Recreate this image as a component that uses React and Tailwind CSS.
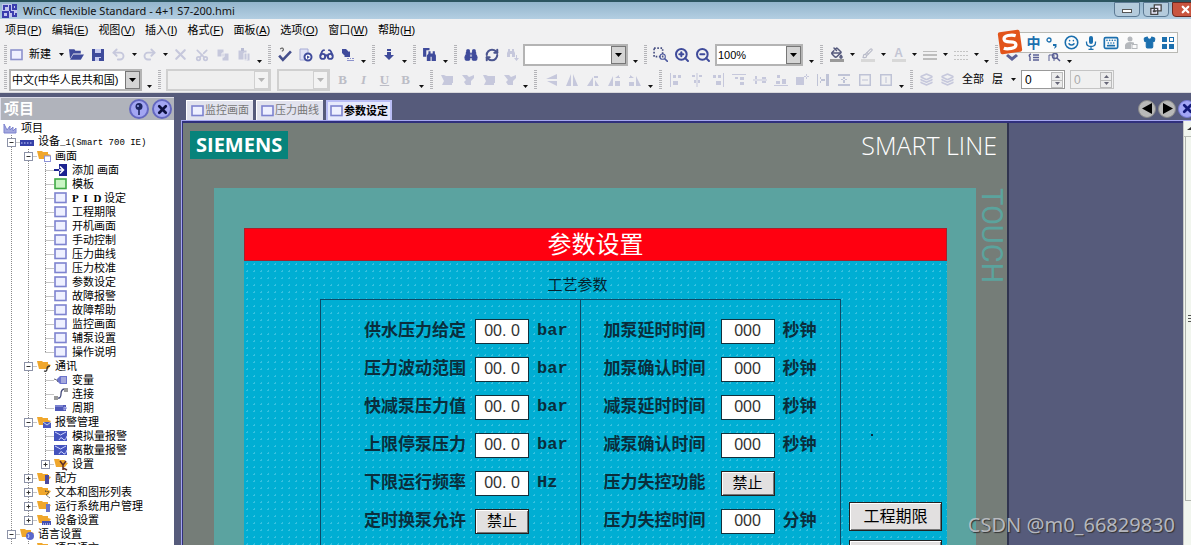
import React from "react";
import {
  Undo2, Redo2, X, Scissors, Glasses,
  Binoculars, RefreshCw, ZoomIn, ZoomOut, PaintBucket, Brush, Smile,
  Keyboard, Shirt, Layers,
} from "lucide-react";

const INK = "#3f4b9b";
const DIM = "#c6c8dc";

/* ---------- toolbar parts ---------- */

function Grip() {
  return (
    <span className="flex w-[10px] shrink-0 justify-center">
      <span className="h-[20px] w-[3px] bg-[repeating-linear-gradient(to_bottom,#b4b4b8_0_1px,#f2f2f3_1px_2px)]" />
    </span>
  );
}

function Arrow({ low = false }) {
  return (
    <button
      type="button"
      aria-label="更多"
      className={
        low
          ? "flex h-[20px] w-[10px] shrink-0 items-end justify-center pb-[2px]"
          : "flex h-[20px] w-[10px] shrink-0 items-center justify-center"
      }
    >
      <svg width="5" height="3" viewBox="0 0 5 3"><path d="M0 0h5L2.5 3z" fill="#111" /></svg>
    </button>
  );
}

function Tool({ label, children }) {
  return (
    <button type="button" aria-label={label} className="flex h-[20px] w-[21px] shrink-0 items-center justify-center">
      {children}
    </button>
  );
}

function Combo({ label, value, width, disabled = false }) {
  return (
    <span
      className={`relative flex h-[22px] shrink-0 border-2 ${width} ${
        disabled ? "border-[#d0d0d0] bg-[#efefef]" : "border-[#b4b4b4] bg-white"
      }`}
    >
      <select
        aria-label={label}
        disabled={disabled}
        className="w-full appearance-none truncate bg-transparent pl-px text-[11px] leading-[18px] text-black"
      >
        <option>{value}</option>
      </select>
      <span
        className={`pointer-events-none absolute inset-y-0 right-0 flex w-[15px] items-center justify-center border ${
          disabled ? "border-[#d0d0d0] bg-[#f3f3f3]" : "border-[#777] bg-[#d4d4d4]"
        }`}
      >
        <svg width="7" height="4" viewBox="0 0 7 4"><path d="M0 0h7L3.5 4z" fill={disabled ? "#b5b5b5" : "#000"} /></svg>
      </span>
    </span>
  );
}

function Spin({ label, disabled = false }) {
  return (
    <span className={`flex h-[19px] w-[44px] shrink-0 items-center border pr-px ${disabled ? "border-[#c4c4c4] bg-[#f0f0f0]" : "border-[#999] bg-white"}`}>
      <input
        aria-label={label}
        defaultValue="0"
        disabled={disabled}
        className={`w-0 flex-1 bg-transparent pl-[3px] text-[12px] leading-[16px] ${disabled ? "text-[#aaa]" : "text-black"}`}
      />
      <span className="flex w-[12px] flex-col border border-[#bbb] bg-[#ececec]">
        <button type="button" aria-label="增加" className="flex h-[7px] items-center justify-center">
          <svg width="5" height="3" viewBox="0 0 5 3"><path d="M0 3h5L2.5 0z" fill="#667" /></svg>
        </button>
        <button type="button" aria-label="减少" className="flex h-[7px] items-center justify-center border-t border-[#bbb]">
          <svg width="5" height="3" viewBox="0 0 5 3"><path d="M0 0h5L2.5 3z" fill="#667" /></svg>
        </button>
      </span>
    </span>
  );
}

function Svg({ children, size = 14 }) {
  return <svg width={size} height={size} viewBox="0 0 14 14" fill="none" className="shrink-0">{children}</svg>;
}

const ScreenIcon = ({ color = "#7d83cf", fill = "#eef0ff" }) => (
  <Svg><rect x="1" y="2" width="11" height="9.500" fill={fill} stroke={color} strokeWidth="1.6" /></Svg>
);

/* Alignment tools of the second toolbar row */
const ALIGN = [
  ["左对齐", "M1 0h1v14H1zM4 2h3v3H4zM9 2h3v3H9zM4 8h5v4H4z"],
  ["水平居中", "M6.500 0h1v14h-1zM2 2h3v2H2zM9 2h3v2H9zM4 7h6v3H4z"],
  ["右对齐", "M12 0h1v14h-1zM2 2h3v3H2zM7 2h3v3H7zM5 8h5v4H5z"],
  ["顶部对齐", "M0 1h14v1H0zM3 4h3v2H3zM8 4h4v3H8zM8 9h4v3H8z"],
  ["垂直居中", "M0 6.500h14v1H0zM2 3h2v8H2zM9 4h4v6H9z"],
  ["底部对齐", "M0 12h14v1H0zM2 8h4v3H2zM8 6h4v5H8zM3 2h3v3H3z"],
  ["居中", "M1 4h8v8H1zM11 1h1v5h-1zM9 3h5v1H9z"],
];
const ALIGN2 = [
  ["等宽", "M1 1h1v12H1zM10 1h3v12h-3zM4 6h5v2H4zM4 4h1v6H4z"],
  ["等高", "M1 1h12v2H1zM1 11h12v2H1zM6 4h2v6H6zM4 6h6v1H4z"],
  ["水平间距", "M1 1h12v12H1zM2.500 2.500v9h9v-9zM4 6.500h6v1H4z"],
  ["垂直间距", "M1 1h12v12H1zM2.500 2.500v9h9v-9zM6.500 4h1v6h-1z"],
];
const FLIPS = [
  ["垂直翻转", "M13 1v5L2 6zM13 8v5L3 8z"],
  ["水平翻转", "M6 1v12H1zM8 1v12h5z"],
  ["左旋", "M1 13 7 4v9zM8 3h4v2H8zM9 7l4 6H9z"],
  ["左转", "M1 13 6 3v10zM8 5l4-3v2h1v1h-3zM8 8h5v5H8z"],
  ["右转", "M13 13 8 3v10zM6 5 2 2v2H1v1h3zM1 9h5v4H1z"],
];

function PathTool({ label, d, color = DIM }) {
  return <Tool label={label}><Svg><path d={d} fill={color} fillRule="evenodd" /></Svg></Tool>;
}

function ToolbarOne() {
  return (
    <div className="flex h-[25px] items-center">
      <span className="w-[7px] shrink-0"><Grip /></span>
      <button type="button" className="flex w-[49px] shrink-0 items-center gap-[5px] pl-[3px] text-[11px] whitespace-nowrap text-black">
        <ScreenIcon color="#8c92cc" />新建
      </button>
      <Arrow />
      <Tool label="打开"><Svg size={15}><path d="M0 2h5l1 1.500h5V6H4L1 11z" fill={INK} /><path d="M4 7h10l-3 5H1z" fill={INK} /></Svg></Tool>
      <Tool label="保存"><Svg><path d="M1 1h12v12H1z" fill={INK} /><path d="M4 1h6v4H4zM4 9h6v4H4z" fill="#c9cdf0" /><path d="M8 10h2v3H8z" fill={INK} /></Svg></Tool>
      <Tool label="撤销"><Undo2 size={15} color={DIM} strokeWidth={3} /></Tool>
      <Arrow />
      <Tool label="重做"><Redo2 size={15} color={DIM} strokeWidth={3} /></Tool>
      <Arrow />
      <Tool label="删除"><X size={17} color={DIM} strokeWidth={3} /></Tool>
      <Tool label="剪切"><Scissors size={14} color={DIM} strokeWidth={3} className="-rotate-90" /></Tool>
      <Tool label="复制"><Svg><path d="M1 1h7v8H1zM6 5h7v8H6z" fill={DIM} stroke="#f1f1f3" /></Svg></Tool>
      <Tool label="粘贴"><Svg><path d="M1 2h9v10H1zM7 5h6v8H7z" fill={DIM} stroke="#f1f1f3" /><path d="M4 0h3v3H4z" fill="#b9bcd4" /></Svg></Tool>
      <Arrow low />
      <Grip />
      <Tool label="检查"><Svg size={15}><path d="m2 8 3.500 4L13 4" stroke="#454f8c" strokeWidth="2.400" /><path d="M3 2q2-2 3 0 0 1.500-1.500 2" stroke="#555" /></Svg></Tool>
      <Tool label="编译"><Svg><path d="M1 1h8v11H1z" fill="#dfe1f5" stroke="#a7acd6" /><circle cx="9" cy="9" r="3.500" fill="#fff" stroke={INK} strokeWidth="2" /><path d="M8 7.500 11 9l-3 2z" fill={INK} /></Svg></Tool>
      <Tool label="预览"><Glasses size={15} color={INK} strokeWidth={3} /></Tool>
      <Tool label="传送"><Svg><path d="M1 1h4l3 3 1-1v6H3l1-1-3-3z" fill={INK} /><path d="M6 10h2v1H6zM9 10h1v1H9zM11 10h2v1h-2zM6 12h7v1H6z" fill="#8b91cc" /></Svg></Tool>
      <Arrow low />
      <Grip />
      <Tool label="下载"><Svg><path d="M5 1h4v2H5zM5 4h4v3h3l-5 5-5-5h3z" fill={INK} /></Svg></Tool>
      <Arrow low />
      <Grip />
      <Tool label="查找替换"><Svg size={15}><path d="M1 1h6v2H4v6H1z" fill={INK} /><path d="M6 4h2v2h2V4h2v2l1 2v5h-4V9H8v4H4.500V8L6 6z" fill={INK} /></Svg></Tool>
      <Arrow low />
      <Grip />
      <Tool label="查找"><Binoculars size={14} color={INK} fill={INK} strokeWidth={2} /></Tool>
      <Tool label="刷新"><RefreshCw size={14} color="#4b558f" strokeWidth={3.5} /></Tool>
      <Tool label="查找下一个"><Svg><path d="M2 1h2v2h2V1h2v2l1 2v4H6V6H4v3H1V5l1-2z" fill={DIM} /><path d="M10 7h1v3h2l-2.500 3L8 10h2z" fill={DIM} /></Svg></Tool>
      <Combo label="查找内容" value="" width="w-[105px]" />
      <span className="w-[2px] shrink-0" />
      <Arrow low />
      <Grip />
      <Tool label="区域缩放"><Svg size={15}><path d="M1 1h8v8H1z" stroke="#444c80" strokeDasharray="1.500 1.500" strokeWidth="1.500" /><circle cx="9" cy="9" r="2.500" stroke="#4e5aa0" /><path d="m11 11 3 3" stroke="#4e5aa0" strokeWidth="1.500" /></Svg></Tool>
      <Tool label="放大"><ZoomIn size={16} color={INK} strokeWidth={3} /></Tool>
      <Tool label="缩小"><ZoomOut size={16} color={INK} strokeWidth={3} /></Tool>
      <span className="w-[2px] shrink-0" />
      <Combo label="缩放比例" value="100%" width="w-[88px]" />
      <span className="w-[3px] shrink-0" />
      <Arrow low />
      <Grip />
      <Tool label="填充颜色"><span className="flex flex-col items-center"><PaintBucket size={12} color="#55597c" strokeWidth={3} /><span className="h-[3px] w-[14px] bg-[#9a9a9a]" /></span></Tool>
      <Arrow />
      <Tool label="线条颜色"><span className="flex flex-col items-center"><Brush size={11} color="#b9bbc9" strokeWidth={2.5} /><span className="h-[3px] w-[14px] bg-[#d8d8d8]" /></span></Tool>
      <Arrow />
      <Tool label="字体颜色"><span className="flex flex-col items-center text-[12px] leading-[11px] font-bold text-[#c3c5d4]">A<span className="h-[3px] w-[14px] bg-[#d8d8d8]" /></span></Tool>
      <Arrow />
      <Tool label="线宽"><Svg><path d="M0 3h14v1H0zM0 6h14v2H0zM0 10h14v2H0z" fill="#bdbdbd" /></Svg></Tool>
      <Arrow />
      <Tool label="线型"><Svg><path d="M0 3.500h14M0 7.500h14M0 11.500h14" stroke="#c4c4c4" strokeDasharray="2 1" /></Svg></Tool>
      <Arrow />
      <Arrow low />
      <Grip />
      <Tool label="书签"><Svg><path d="m1 8 6 5 6-5-2-2-4 3-4-3z" fill="#5b6095" /></Svg></Tool>
      <Tool label="列表"><Svg><path d="M4 13V9q-2-2 1-3M7 7h6M7 9.500h6M7 12h6" stroke="#5b6095" strokeWidth="1.400" /></Svg></Tool>
      <Tool label="搜索项"><Svg><path d="M2 13V7h5v6" stroke="#5b6095" /><circle cx="8" cy="8" r="2.500" stroke="#5b6095" strokeWidth="1.500" /><path d="m10 10 3 3" stroke="#5b6095" strokeWidth="1.500" /></Svg></Tool>
      <Arrow low />
    </div>
  );
}

function ToolbarTwo() {
  return (
    <div className="flex h-[25px] items-center">
      <span className="w-[9px] shrink-0"><Grip /></span>
      <Combo label="语言" value="中文(中华人民共和国)" width="w-[133px]" />
      <span className="w-[2px] shrink-0" />
      <Arrow low />
      <Grip />
      <span className="w-[2px] shrink-0" />
      <Combo label="字体" value="" width="w-[105px]" disabled />
      <span className="w-[6px] shrink-0" />
      <Combo label="字号" value="" width="w-[53px]" disabled />
      <span className="w-[2px] shrink-0" />
      {[["加粗", "B", "font-bold"], ["斜体", "I", "font-bold italic"], ["下划线", "U", "font-bold underline"], ["字符", "B", "font-bold"]].map(([l, t, c]) => (
        <Tool key={l} label={l}><span className={`font-["Liberation_Serif",serif] text-[13px] leading-[16px] text-[#bcbdc6] ${c}`}>{t}</span></Tool>
      ))}
      <Arrow low />
      <Grip />
      {["置前", "置后", "前移", "后移"].map((l, i) => (
        <PathTool key={l} label={l} d={i % 2 ? "M1 2h5l2 2 5-2v3l-3 3v4H5L3 9l2-2z" : "M1 2h3l2 1h7v7h-1v2H8L2 12l2-4z"} />
      ))}
      <Arrow low />
      <Grip />
      {FLIPS.map(([l, d]) => <PathTool key={l} label={l} d={d} />)}
      <Arrow low />
      <Grip />
      {ALIGN.map(([l, d]) => <PathTool key={l} label={l} d={d} />)}
      {ALIGN2.map(([l, d]) => <PathTool key={l} label={l} d={d} color="#bfc3d6" />)}
      <Arrow low />
      <Grip />
      <Tool label="上一层"><Layers size={13} color={DIM} strokeWidth={3} /></Tool>
      <Tool label="下一层"><Layers size={13} color={DIM} strokeWidth={3} /></Tool>
      <button type="button" className="ml-[4px] shrink-0 text-[11px] text-black">全部</button>
      <button type="button" className="ml-[8px] shrink-0 text-[11px] text-black">层</button>
      <span className="w-[5px] shrink-0" />
      <Arrow />
      <span className="w-[3px] shrink-0" />
      <Spin label="层号" />
      <span className="w-[5px] shrink-0" />
      <Spin label="可见层" disabled />
    </div>
  );
}

/* ---------- project tree ---------- */

const folder = <path d="M0 2h5l1 1h5v2l3 1-3 4H2z" fill="#f0a72c" />;
const ICONS = {
  root: <path d="M1 3v9h12V7l-3 3V6L7 9V5L4 9z" fill="#a3a8de" stroke="#7d83cf" />,
  device: <><path d="M0 5h14v6H0z" fill="#3540a8" /><path d="M1 8h12" stroke="#cfd3ff" strokeDasharray="1.500 1.500" /></>,
  screens: <>{folder}<rect x="7.500" y="7" width="6" height="5.500" fill="#fff" stroke="#8c92d8" /></>,
  add: <><path d="M5 1h8v12H5z" fill="#1c2390" /><path d="M0 7h9M6 3.500 9.500 7 6 10.500" stroke="#fff" strokeWidth="1.500" /><path d="M0 7h5" stroke="#1c2390" strokeWidth="2" /></>,
  comm: <>{folder}<path d="M7 12q3 1 3-2t3-3" stroke="#333" strokeWidth="1.300" /></>,
  tag: <><path d="M6 3h7v8H6L3 8V6z" fill="#6c74cc" /><path d="M7 5h5M7 7h5M7 9h5" stroke="#dde" /><path d="M0 6q3 0 4 3" stroke="#667" /></>,
  link: <><path d="M3 11q4 1 4-4t4-5" stroke="#444a7a" strokeWidth="1.300" /><rect y="9" width="4" height="4" fill="#999" /><rect x="10" y="1" width="4" height="4" fill="#999" /></>,
  cycle: <><path d="M1 4h11v6H1z" fill="#4f58b8" /><path d="M1 5h8M10 6l3 1-3 2z" stroke="#a9afe8" /></>,
  alarms: <>{folder}<rect x="6" y="7" width="8" height="6" fill="#4a58c0" /><path d="m6 7 4 3 4-3" stroke="#cdd" /></>,
  alarm: <><rect x="0" y="2" width="13" height="10" fill="#4453bd" /><path d="m1 3 5.500 3L12 3M5 11q2-4 4-1t4-3" stroke="#cdd3ff" /></>,
  tools: <>{folder}<path d="M6 4l3 4 3-4M9 8v5M9 11l4 2" stroke="#5d2f2a" strokeWidth="1.500" /></>,
  recipe: <>{folder}<path d="M8 4h4v9H8z" fill="#4a4aa0" /></>,
  text: <>{folder}<path d="M8 6l4 1-3 3 4 3" stroke="#333" strokeDasharray="1.500 1" /></>,
  users: <>{folder}<path d="M9 5h4v8H9z" fill="#6a76c8" /></>,
  settings: <>{folder}<path d="M5 8h9v4H5z" fill="#4350b4" /><path d="M6 11h7" stroke="#fff" strokeDasharray="1 1" /></>,
  lang: <>{folder}<circle cx="10" cy="9" r="4" fill="#5a68cc" /><path d="M8 7q2 2 0 4" stroke="#cfd6ff" /></>,
};

// [level, expander mark, label, icon]
const TREE = [
  [0, "", "项目", "root"],
  [1, "-", "设备_1(Smart 700 IE)", "device"],
  [2, "-", "画面", "screens"],
  [3, "", "添加 画面", "add"],
  [3, "", "模板", "template"],
  [3, "", "P I D设定", "screen"],
  [3, "", "工程期限", "screen"],
  [3, "", "开机画面", "screen"],
  [3, "", "手动控制", "screen"],
  [3, "", "压力曲线", "screen"],
  [3, "", "压力校准", "screen"],
  [3, "", "参数设定", "screen"],
  [3, "", "故障报警", "screen"],
  [3, "", "故障帮助", "screen"],
  [3, "", "监控画面", "screen"],
  [3, "", "辅泵设置", "screen"],
  [3, "", "操作说明", "screen"],
  [2, "-", "通讯", "comm"],
  [3, "", "变量", "tag"],
  [3, "", "连接", "link"],
  [3, "", "周期", "cycle"],
  [2, "-", "报警管理", "alarms"],
  [3, "", "模拟量报警", "alarm"],
  [3, "", "离散量报警", "alarm"],
  [3, "+", "设置", "tools"],
  [2, "+", "配方", "recipe"],
  [2, "+", "文本和图形列表", "text"],
  [2, "+", "运行系统用户管理", "users"],
  [2, "+", "设备设置", "settings"],
  [1, "-", "语言设置", "lang"],
  [2, "", "项目语言", "lang"],
];

function TreeRow({ index }) {
  const [level, mark, label, icon] = TREE[index];
  const next = TREE[index + 1];
  const last = !next || next[0] < level;
  const cells = [];
  for (let i = 1; i < level; i++) {
    cells.push(<path key={i} d={`M${17 * i - 8.5} 0v14`} stroke="#8a8a8a" strokeDasharray="1 1" />);
  }
  const cx = 17 * level - 8.5;
  return (
    <li className="flex h-[14px] items-center whitespace-nowrap">
      {level > 0 && (
        <svg width={17 * level} height="14" className="shrink-0">
          {cells}
          <path d={`M${cx} 0v${last ? 7 : 14}M${cx} 7.500h9`} stroke="#8a8a8a" strokeDasharray="1 1" />
          {mark && (
            <>
              <rect x={cx - 4} y="3.500" width="8" height="8" fill="#fff" stroke="#8d93a8" />
              <path d={`M${cx - 2} 7.500h4${mark === "+" ? `M${cx} 5.500v4` : ""}`} stroke="#333" />
            </>
          )}
        </svg>
      )}
      <span className="flex w-[18px] shrink-0">
        {icon === "screen" ? <ScreenIcon /> : icon === "template" ? <ScreenIcon color="#3fa845" fill="#c9f5c4" /> : <Svg>{ICONS[icon]}</Svg>}
      </span>
      <span className={
        index === 1
          ? 'font-["Liberation_Mono","Noto_Sans_CJK_SC",monospace] text-[9px]'
          : index === 5
            ? 'font-["Liberation_Serif","Noto_Sans_CJK_SC",serif] text-[11px]'
            : "text-[11px]"
      }>
        {index === 5 ? <><b className="text-[11px] whitespace-pre">P  I  D </b>设定</>
          : index === 1 ? <><span className="text-[11px]">设备</span>_1(Smart 700 IE)</>
          : label}
      </span>
    </li>
  );
}

function Sidebar() {
  return (
    <aside className="flex w-[174px] shrink-0 flex-col overflow-hidden bg-white">
      <header className="flex h-[23px] shrink-0 items-center border-t border-l border-[#dcdce8] bg-[#b0b3bb] pr-[2px] pl-[3px]">
        <h2 className="flex-1 text-[15px] font-bold text-white">项目</h2>
        <button type="button" aria-label="固定" className="flex size-[20px] items-center justify-center rounded-full border-2 border-[#6468c0] bg-[#a3a6f2]">
          <Svg><path d="M7 6v7" stroke="#111a55" strokeWidth="1.500" /><circle cx="7" cy="4.500" r="3.500" fill="#1d2560" /><circle cx="6" cy="4" r="1" fill="#9aa6ee" /></Svg>
        </button>
        <button type="button" aria-label="关闭" className="ml-[3px] flex size-[20px] items-center justify-center rounded-full border-2 border-[#6468c0] bg-[#a3a6f2]">
          <X size={13} color="#0d1040" strokeWidth={5} />
        </button>
      </header>
      <ul className="flex flex-col pt-px pl-[3px] text-black">
        {TREE.map((_, i) => <TreeRow key={i} index={i} />)}
      </ul>
    </aside>
  );
}

/* ---------- HMI screen ---------- */

const LEFT = [
  ["供水压力给定", "00. 0", "bar"],
  ["压力波动范围", "00. 0", "bar"],
  ["快减泵压力值", "00. 0", "bar"],
  ["上限停泵压力", "00. 0", "bar"],
  ["下限运行频率", "00. 0", "Hz"],
  ["定时换泵允许", null, ""],
];
const RIGHT = [
  ["加泵延时时间", "000", "秒钟"],
  ["加泵确认时间", "000", "秒钟"],
  ["减泵延时时间", "000", "秒钟"],
  ["减泵确认时间", "000", "秒钟"],
  ["压力失控功能", null, ""],
  ["压力失控时间", "000", "分钟"],
];

const RAISED = "border border-[#222] bg-[#e2e0e0] text-black shadow-[inset_1px_1px_0_#fff,inset_-1px_-1px_0_#777]";

function Field({ id, row, labelWidth }) {
  const [label, value, unit] = row;
  return (
    <div className="flex h-[38px] items-center text-[17px] leading-[24px] font-bold text-[#0a2e3c]">
      <label htmlFor={id} className={`shrink-0 ${labelWidth}`}>{label}</label>
      {value === null ? (
        <button id={id} type="button" className={`h-[25px] w-[54px] shrink-0 text-[15px] leading-[20px] font-normal ${RAISED}`}>禁止</button>
      ) : (
        <input id={id} defaultValue={value} className="h-[25px] w-[54px] shrink-0 border border-[#12303c] bg-white text-center text-[16px] font-normal text-[#333]" />
      )}
      <span className={/[a-z]/.test(unit) ? 'pl-[8px] font-["Liberation_Mono",monospace]' : "pl-[8px]"}>{unit}</span>
    </div>
  );
}

function Device() {
  return (
    <div className="flex w-[826px] shrink-0 flex-col border-r-2 border-[#30344f] bg-[#757d78]">
      <header className="flex h-[65px] shrink-0 items-start justify-between pt-[8px] pr-[10px] pl-[7px]">
        <span className='bg-[#07837b] px-[6px] font-["Open_Sans",sans-serif] text-[20px] leading-[28px] font-bold text-white'>SIEMENS</span>
        <span className='font-["Open_Sans",sans-serif] text-[25px] leading-[28px] font-light text-white'>SMART LINE</span>
      </header>
      <div className="flex flex-1 pl-[31px]">
        <div className="flex flex-1 flex-col bg-[#5ba3a0] pt-[40px] pr-[29px] pl-[30px]">
          <h1 className="h-[33px] shrink-0 border border-[#a8202c] bg-[#ff0010] text-center text-[24px] leading-[31px] text-white">参数设置</h1>
          <div className="flex flex-1 bg-[#00aed3] bg-[radial-gradient(circle,#36c1e0_1px,transparent_1px)] bg-size-[7px_7px] pl-[76px]">
            <section className="flex w-[521px] flex-col">
              <h2 className="pt-[14px] pr-[6px] pb-[4px] text-center text-[15px] leading-[20px] text-[#06222e]">工艺参数</h2>
              <div className="grid flex-1 grid-cols-2 border-x border-t border-[#0d4a68]">
                <div className="border-r border-[#0d4a68] pt-[12px] pl-[43px]">
                  {LEFT.map((r, i) => <Field key={i} id={`l${i}`} row={r} labelWidth="w-[111px]" />)}
                </div>
                <div className="pt-[12px] pl-[23px]">
                  {RIGHT.map((r, i) => <Field key={i} id={`r${i}`} row={r} labelWidth="w-[117px]" />)}
                </div>
              </div>
            </section>
            <div className="flex flex-1 flex-col pt-[173px] pr-[5px] pl-[8px]">
              <span className="ml-[22px] size-[2px] bg-[#0a2a3c]" />
              <button type="button" className={`mt-[66px] h-[29px] text-[16px] ${RAISED}`}>工程期限</button>
              <button type="button" aria-label="返回" className={`mt-[9px] h-[29px] ${RAISED}`} />
            </div>
          </div>
        </div>
        <span className='w-[31px] shrink-0 font-["Liberation_Sans_Narrow",Roboto,sans-serif] text-[29px] leading-[31px] text-[#5ba39d] [writing-mode:vertical-rl]'>TOUCH</span>
      </div>
    </div>
  );
}

/* ---------- window ---------- */

const MENUS = [["项目", "P"], ["编辑", "E"], ["视图", "V"], ["插入", "I"], ["格式", "F"], ["面板", "A"], ["选项", "O"], ["窗口", "W"], ["帮助", "H"]];

function RoundButton({ label, blue = false, children }) {
  return (
    <button type="button" aria-label={label} className={`flex size-[18px] shrink-0 items-center justify-center rounded-full border ${blue ? "border-[#7478d0] bg-[#a3a6f6]" : "border-[#888] bg-[#b9b9b9]"}`}>
      {children}
    </button>
  );
}

function ImeBar() {
  const c = "#1b6fae";
  return (
    <div className="absolute top-[32px] right-[13px] flex h-[21px] w-[176px] items-center border border-[#b9b9b4] bg-[#fbfbfb] pl-[21px]">
      <svg width="26" height="26" viewBox="0 0 26 26" className="absolute -top-[4px] -left-[6px]">
        <g transform="rotate(-8 13 13)">
          <rect x="2" y="2" width="22" height="22" rx="2" fill="#e2541b" />
          <path d="M19.500 7.500q-3-1.500-7.500-1.200T7.500 9.500q0 2.600 5.500 3.300t5.500 3.400q0 3-5 3.300T6 18.300" stroke="#fff" strokeWidth="3.200" fill="none" />
        </g>
      </svg>
      <div className="flex flex-1 items-center justify-around">
        <span className="text-[14px] leading-[18px] font-bold text-[#1b6fae]">中</span>
        <Svg><circle cx="4" cy="4" r="2" stroke={c} strokeWidth="1.300" /><path d="M8 8h3.500v3L9 13l1-3H8z" fill={c} /></Svg>
        <Smile size={15} color={c} strokeWidth={2.5} />
        <Svg><rect x="5" y="0" width="4" height="8" rx="2" fill={c} /><path d="M2.500 5.500v1q0 4 4.500 4t4.500-4v-1M7 10v3M4.500 13.300h5" stroke={c} strokeWidth="1.300" /></Svg>
        <Keyboard size={16} color={c} strokeWidth={2.5} />
        <Svg><circle cx="6" cy="3" r="2.500" fill="#b5b8bc" /><path d="M1 13V9q1-3 5-3t4 1v1H7v5z" fill="#b5b8bc" /><rect x="8" y="8.500" width="5" height="4" stroke="#b5b8bc" /></Svg>
        <Shirt size={13} color={c} fill={c} />
        <Svg><path d="M1 1h5v5H1zM1 8h5v5H1zM8 8h5v5H8z" fill={c} /><rect x="8.500" y="1.500" width="4" height="4" stroke={c} /></Svg>
      </div>
    </div>
  );
}

function Tab({ children, active = false }) {
  return (
    <button
      type="button"
      role="tab"
      aria-selected={active}
      className={`flex h-[20px] items-center text-[11px] whitespace-nowrap ${
        active ? "border-2 border-b-0 border-[#b9bdf5] bg-[#e6e9fc] px-[2px] font-bold text-black" : "border-t border-l border-white bg-[#e2e3ee] px-[4px] text-[#777]"
      }`}
    >
      <ScreenIcon />{children}
    </button>
  );
}

export default function App() {
  return (
    <div className='relative flex h-screen flex-col overflow-hidden bg-[#565b7b] font-["Liberation_Sans","Noto_Sans_CJK_SC",sans-serif]'>
      <header className="flex h-[19px] shrink-0 items-center border-t-2 border-[#2c5560] bg-linear-to-b from-[#93b5cc] to-[#b3cee2] pl-[2px]">
        <svg width="15" height="15" viewBox="0 0 15 15"><path d="M0 1h15v13H0z" fill="#c3c6ee" /><path d="M2 7V3h4M8 2v6M11 2h3v4h-3zM1 9h5v5H1zM8 9h3v4h3v-3" stroke="#3b3fae" strokeWidth="2" fill="none" /></svg>
        <h1 className='flex-1 pl-[6px] font-["Noto_Sans",sans-serif] text-[11px] leading-[16px] text-[#111]'>WinCC flexible Standard - 4+1 S7-200.hmi</h1>
        <div className="flex gap-[3px] self-start overflow-hidden">
          <button type="button" aria-label="最小化" className="flex h-[15px] w-[26px] items-center justify-center rounded-b border border-[#5c7a94] bg-[#b4cbdc]"><span className="mt-[3px] h-[4px] w-[10px] border border-[#555] bg-white" /></button>
          <button type="button" aria-label="还原" className="flex h-[15px] w-[26px] items-center justify-center rounded-b border border-[#5c7a94] bg-[#b4cbdc]"><Svg size={12}><path d="M5 1h8v7H5zM1 5h8v7H1zM4 8h2v1H4z" stroke="#444" strokeWidth="1.500" fill="#eef" /></Svg></button>
          <button type="button" aria-label="关闭" className="-mr-[7px] flex h-[15px] w-[26px] items-center justify-center rounded-b border border-[#6c2a22] bg-[#c9553f]"><X size={11} color="#fff" strokeWidth={5} /></button>
        </div>
      </header>

      <div className="shrink-0 overflow-hidden border-b border-[#d8d8dc] bg-[#f1f1f2]">
        <nav className="flex h-[23px] items-center gap-[10px] pl-[5px] text-[11px] text-black">
          {MENUS.map(([t, k]) => (
            <button key={k} type="button" className="whitespace-nowrap">{t}(<u>{k}</u>)</button>
          ))}
        </nav>
        <ToolbarOne />
        <ToolbarTwo />
      </div>

      <div className="flex min-h-0 flex-1 pt-[4px]">
        <Sidebar />
        <main className="ml-[7px] flex min-w-0 flex-1 flex-col">
          <div className="flex h-[23px] shrink-0 items-end justify-between pl-[5px]">
            <div role="tablist" className="flex gap-[3px]">
              <Tab>监控画面</Tab>
              <Tab>压力曲线</Tab>
              <Tab active>参数设定</Tab>
            </div>
            <div className="-mr-[5px] flex gap-[2px] self-center">
              <RoundButton label="向左"><svg width="11" height="11"><path d="M10 0v11L0 5.500z" /></svg></RoundButton>
              <RoundButton label="向右"><svg width="11" height="11"><path d="M1 0v11l10-5.500z" /></svg></RoundButton>
              <RoundButton label="关闭" blue><X size={13} color="#141a7a" strokeWidth={5} /></RoundButton>
            </div>
          </div>
          <div className="flex min-h-0 flex-1 overflow-hidden border-t border-l border-[#a5a6f0]">
            <div className="flex min-w-0 flex-1 overflow-hidden border-t-2 border-l border-[#30307c]">
              <Device />
            </div>
            <div className="flex w-[8px] shrink-0 flex-col overflow-hidden border-l border-[#c6c8c6] bg-[#f1f5ee]">
              <button type="button" aria-label="向上滚动" className="flex h-[16px] shrink-0 items-center justify-end border-b border-[#b9bdb6]"><svg width="4" height="3"><path d="M0 3h4V0z" fill="#333" /></svg></button>
              <span className="ml-px flex h-[364px] shrink-0 items-center justify-end border-b border-l border-[#aeb2ac]">
                <span className="h-[7px] w-[3px] bg-[repeating-linear-gradient(to_bottom,#555_0_1px,transparent_1px_3px)]" />
              </span>
            </div>
          </div>
        </main>
      </div>

      <ImeBar />
      <p className='absolute right-[16px] bottom-[6px] font-["Noto_Sans",sans-serif] text-[20px] leading-[28px] text-[#c4c6cc]/90 [text-shadow:1px_1px_1px_#333]'>CSDN @m0_66829830</p>
    </div>
  );
}
